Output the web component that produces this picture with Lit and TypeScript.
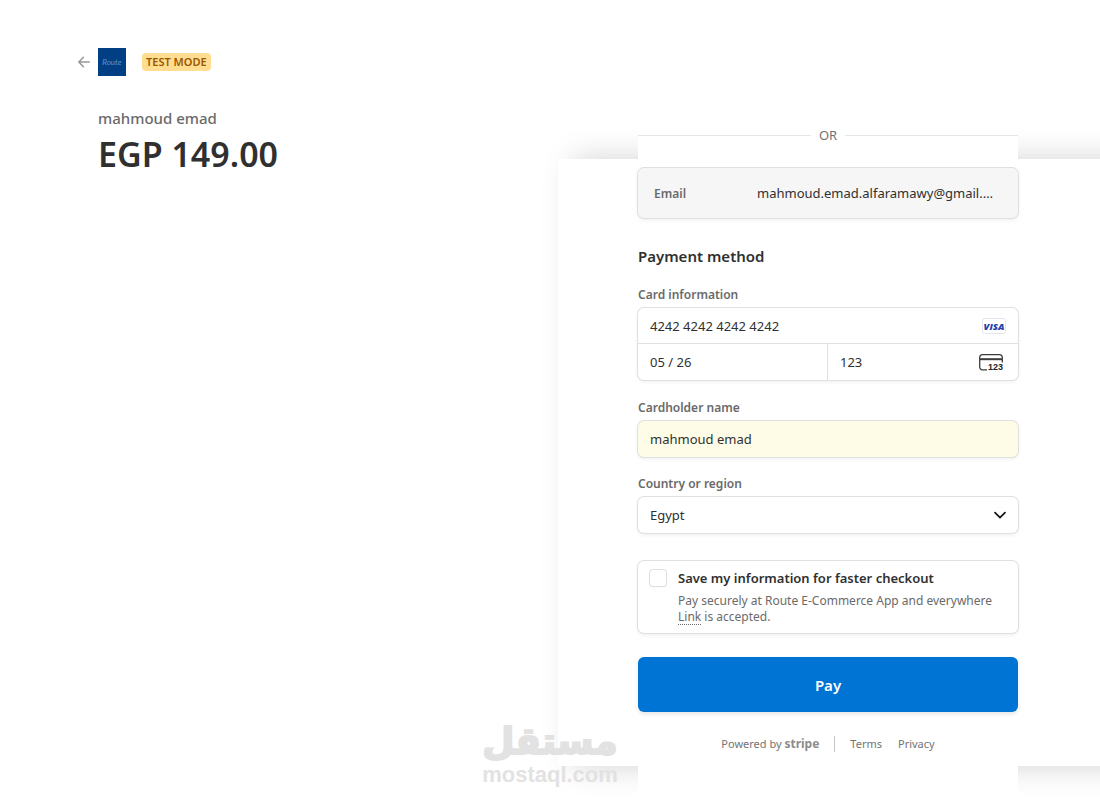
import { LitElement, html, css } from "lit";
import { customElement, state } from "lit/decorators.js";

@customElement("order-summary")
export class OrderSummary extends LitElement {
  static styles = css`
    :host {
      display: block;
      width: 100%;
      max-width: 380px;
    }
    .bar {
      display: flex;
      align-items: center;
      height: 28px;
      margin-left: -20px;
    }
    .back {
      display: flex;
      width: 12px;
      margin-right: 8px;
    }
    .logo {
      display: grid;
      place-items: center;
      width: 28px;
      height: 28px;
      margin-right: 16px;
      background: #003f84;
      color: #5b93c9;
      font: italic 400 8px/28px Lato, sans-serif;
    }
    .badge {
      padding: 0 4px;
      border-radius: 4px;
      background: #ffde92;
      color: #9c5600;
      font-size: 11px;
      line-height: 18px;
      font-weight: 600;
      white-space: nowrap;
    }
    .product {
      margin: 30px 0 0;
      color: #6a6a6a;
      font-size: 15px;
      line-height: 24px;
      font-weight: 500;
    }
    .amount {
      margin: 0;
      color: #303030;
      font-size: 34px;
      line-height: 48px;
      font-weight: 600;
    }
  `;

  render() {
    return html`
      <header class="bar">
        <a class="back" href="#" aria-label="Back">
          <svg width="12" height="12" viewBox="0 0 12 12" fill="none" stroke="#989898" stroke-width="1.5" stroke-linecap="round" stroke-linejoin="round">
            <path d="M11.3 6H.9M5.4 1.2.8 6l4.6 4.8" />
          </svg>
        </a>
        <div class="logo">Route</div>
        <span class="badge">TEST MODE</span>
      </header>
      <h1 class="product">mahmoud emad</h1>
      <p class="amount">EGP 149.00</p>
    `;
  }
}

@customElement("payment-form")
export class PaymentForm extends LitElement {
  static styles = css`
    :host {
      display: block;
      color: #303030;
    }
    * {
      box-sizing: border-box;
    }
    form {
      display: flex;
      flex-direction: column;
    }
    .or {
      display: flex;
      align-items: center;
      gap: 8px;
      margin-bottom: 23px;
      color: #737373;
      font-size: 13px;
      line-height: 20px;
    }
    .or::before,
    .or::after {
      content: "";
      flex: 1;
      height: 1px;
      background: #e6e6e6;
    }
    .box {
      border-radius: 6px;
      background: #fff;
      box-shadow: 0 0 0 1px #e0e0e0, 0 2px 4px rgba(0, 0, 0, 0.07);
    }
    .email {
      display: flex;
      justify-content: space-between;
      align-items: center;
      height: 50px;
      margin: 0 0 26px;
      padding: 0 25px 0 16px;
      background: #f6f6f6;
      font-size: 13px;
    }
    .email dt {
      color: #6a6a6a;
      font-size: 12px;
      font-weight: 600;
    }
    .email dd {
      margin: 0;
    }
    h2 {
      margin: 0 0 18px;
      font-size: 15px;
      line-height: 24px;
      font-weight: 600;
    }
    .label {
      display: block;
      margin: 0 0 4px;
      padding: 0;
      color: #6a6a6a;
      font-size: 12px;
      line-height: 18px;
      font-weight: 600;
    }
    fieldset {
      min-width: 0;
      margin: 0 0 19px;
      padding: 0;
      border: 0;
    }
    .card {
      display: grid;
      grid-template-columns: 1fr 1fr;
    }
    .cell {
      display: flex;
      align-items: center;
      height: 36px;
      padding-right: 12px;
    }
    .number {
      grid-column: 1 / -1;
      border-bottom: 1px solid #e0e0e0;
    }
    .expiry {
      border-right: 1px solid #e0e0e0;
    }
    .cvc {
      padding-right: 15px;
    }
    input,
    select {
      font: inherit;
      color: inherit;
    }
    .text {
      flex: 1;
      width: 100%;
      min-width: 0;
      height: 36px;
      padding: 0 12px;
      border: 0;
      outline: 0;
      background: transparent;
      font-size: 13px;
    }
    .filled {
      background: #fefce6;
    }
    .name {
      height: 36px;
      margin-bottom: 18px;
    }
    .country {
      display: grid;
      align-items: center;
      height: 36px;
      margin-bottom: 28px;
    }
    .country > * {
      grid-area: 1 / 1;
    }
    .country select {
      appearance: none;
      border-radius: 6px;
    }
    .chevron {
      justify-self: end;
      margin-right: 12px;
      pointer-events: none;
    }
    .save {
      display: grid;
      grid-template-columns: 16px 1fr;
      column-gap: 12px;
      margin-bottom: 24px;
      padding: 7px 12px 8px;
    }
    .check {
      appearance: none;
      width: 16px;
      height: 16px;
      margin: 2px 0 0;
      border-radius: 3px;
      box-shadow: 0 0 0 1px #e0e0e0, 0 1px 2px rgba(0, 0, 0, 0.08);
    }
    .check:checked {
      background: #0074d4;
    }
    .save label {
      font-size: 13px;
      line-height: 20px;
      font-weight: 600;
    }
    .save p {
      grid-column: 2;
      margin: 5px 0 0;
      color: #6a6a6a;
      font-size: 12px;
      line-height: 16px;
    }
    .save a {
      color: inherit;
      text-decoration: underline dotted;
      text-underline-offset: 3px;
    }
    .pay {
      height: 55px;
      border: 0;
      border-radius: 6px;
      background: #0074d4;
      box-shadow: 0 2px 4px rgba(0, 0, 0, 0.1);
      color: #fff;
      font: inherit;
      font-size: 15px;
      font-weight: 600;
      cursor: pointer;
    }
    footer {
      display: flex;
      justify-content: center;
      align-items: center;
      margin-top: 24px;
      color: #737373;
      font-size: 11px;
      line-height: 16px;
    }
    footer a {
      color: inherit;
      text-decoration: none;
    }
    .powered {
      padding-right: 15px;
      border-right: 1px solid #c8c8c8;
    }
    .stripe {
      color: #8c8c8c;
      font-size: 12px;
      font-weight: 700;
    }
    .links {
      display: flex;
      gap: 16px;
      padding-left: 15px;
    }
  `;

  @state() private save = false;

  render() {
    return html`
      <form @submit=${(e: Event) => e.preventDefault()}>
        <div class="or">OR</div>
        <dl class="box email">
          <dt>Email</dt>
          <dd>mahmoud.emad.alfaramawy@gmail.…</dd>
        </dl>

        <h2>Payment method</h2>
        <fieldset>
          <legend class="label">Card information</legend>
          <div class="box card">
            <div class="cell number">
              <input class="text" aria-label="Card number" value="4242 4242 4242 4242" />
              <svg width="24" height="16" viewBox="0 0 24 16" role="img" aria-label="Visa">
                <rect x=".5" y=".5" width="23" height="15" rx="2" fill="#fff" stroke="#e3e5ee" />
                <text x="12" y="11.5" text-anchor="middle" fill="#1f3fae" font-family="Open Sans, sans-serif" font-style="italic" font-weight="800" font-size="9.5">VISA</text>
              </svg>
            </div>
            <div class="cell expiry">
              <input class="text" aria-label="Expiration" value="05 / 26" />
            </div>
            <div class="cell cvc">
              <input class="text" aria-label="CVC" value="123" />
              <svg width="24" height="17" viewBox="0 0 24 17" role="img" aria-label="Security code">
                <path d="M8 15.8H3.4A2.7 2.7 0 0 1 .7 13.1V3.4A2.7 2.7 0 0 1 3.4 .7h17.2a2.7 2.7 0 0 1 2.7 2.7V8.6" fill="none" stroke="#3c3c3c" stroke-width="1.3" />
                <path d="M1 4.2h22v2H1z" fill="#3c3c3c" />
                <text x="9" y="16.4" fill="#222" font-family="Liberation Sans, sans-serif" font-weight="700" font-size="9">123</text>
              </svg>
            </div>
          </div>
        </fieldset>

        <label class="label" for="holder">Cardholder name</label>
        <div class="box name filled">
          <input class="text" id="holder" value="mahmoud emad" />
        </div>

        <label class="label" for="country">Country or region</label>
        <div class="box country">
          <select class="text" id="country">
            <option>Egypt</option>
          </select>
          <svg class="chevron" width="12" height="8" viewBox="0 0 12 8" fill="none" stroke="#1a1a1a" stroke-width="1.8" stroke-linecap="round" stroke-linejoin="round">
            <path d="m1 1.6 5 5 5-5" />
          </svg>
        </div>

        <div class="box save">
          <input class="check" id="save" type="checkbox" .checked=${this.save}
            @change=${(e: Event) => (this.save = (e.target as HTMLInputElement).checked)} />
          <label for="save">Save my information for faster checkout</label>
          <p>Pay securely at Route E-Commerce App and everywhere <a href="#">Link</a> is accepted.</p>
        </div>

        <button class="pay" type="submit">Pay</button>
      </form>
      <footer>
        <a class="powered" href="#">Powered by <span class="stripe">stripe</span></a>
        <nav class="links"><a href="#">Terms</a><a href="#">Privacy</a></nav>
      </footer>
    `;
  }
}

@customElement("app-root")
export class AppRoot extends LitElement {
  static styles = css`
    :host {
      display: block;
      position: relative;
      overflow: hidden;
      background: #fff;
      font-family: "Noto Sans", "Open Sans", sans-serif;
    }
    .page {
      display: grid;
      grid-template-columns: 1fr 1fr;
      min-height: 100vh;
      padding-left: 16px;
      box-sizing: border-box;
    }
    .left {
      display: flex;
      justify-content: flex-end;
      padding: 48px 80px 0 24px;
    }
    .right {
      display: grid;
      grid-template-columns: 100%;
    }
    .right > * {
      grid-area: 1 / 1;
    }
    .panel {
      margin: 159px -40px 37px 0;
      background: #fff;
      box-shadow: 15px 0 30px rgba(0, 0, 0, 0.18);
    }
    .column {
      position: relative;
      max-width: 380px;
      margin: 0 24px 0 80px;
      padding-top: 125px;
      background: #fff;
    }
    .mark {
      position: absolute;
      left: 50%;
      bottom: 16px;
      transform: translateX(-50%);
      display: flex;
      flex-direction: column;
      align-items: center;
      color: #e2e2e2;
      font: 700 22px/24px "Liberation Sans", sans-serif;
      pointer-events: none;
    }
    .arabic {
      font: 700 37px/42px "DejaVu Sans", sans-serif;
      -webkit-text-stroke: 2px #e2e2e2;
      paint-order: stroke fill;
    }
  `;

  render() {
    return html`
      <main class="page">
        <section class="left"><order-summary></order-summary></section>
        <section class="right">
          <div class="panel"></div>
          <div class="column"><payment-form></payment-form></div>
        </section>
      </main>
      <div class="mark" aria-hidden="true">
        <span class="arabic" lang="ar" dir="rtl">مستقل</span>
        <span>mostaql.com</span>
      </div>
    `;
  }
}
